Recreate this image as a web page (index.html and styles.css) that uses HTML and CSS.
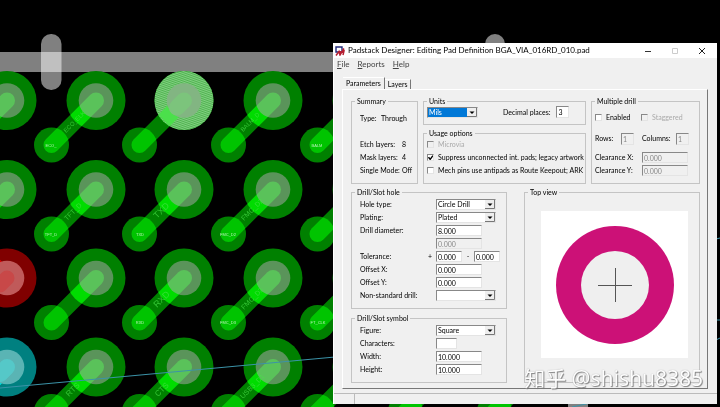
FILE: index.html
```
<!DOCTYPE html>
<html lang="en">
<head>
<meta charset="utf-8">
<title>Padstack Designer</title>
<link rel="stylesheet" href="styles.css">
</head>
<body>
<svg class="board" viewBox="0 0 720 407" preserveAspectRatio="xMinYMin slice" aria-hidden="true">
  <defs>
    <pattern id="hatch" width="2" height="2" patternUnits="userSpaceOnUse" patternTransform="rotate(20)">
      <rect width="2" height="2" fill="#50b450"/><rect width="2" height="1" fill="#82cf82"/>
    </pattern>
    <clipPath id="ring"><circle r="29.5"/></clipPath>
    <clipPath id="via"><circle cx="-44.5" cy="44.5" r="17.5"/></clipPath>
    <g id="net">
      <circle r="29.5" fill="#008000"/>
      <circle cx="-44.5" cy="44.5" r="17.5" fill="#008000"/>
      <path d="M0 0L-44.5 44.5" class="trace"/>
      <path d="M0 0L-44.5 44.5" class="trace on-pad" clip-path="url(#ring)"/>
      <path d="M0 0L-44.5 44.5" class="trace on-via" clip-path="url(#via)"/>
      <circle r="17.3" class="drill"/>
    </g>
  </defs>
  <rect width="720" height="407" fill="#000"/>
  <rect y="52" width="720" height="20" fill="#808080"/>
  <rect x="41" y="34" width="20.500" height="56" rx="10" fill="#808080"/>
  <rect x="41" y="52" width="20.500" height="20" fill="#c0c0c0"/>
  <rect x="485" y="34" width="20" height="56" rx="10" fill="#808080"/>
  <rect x="717" y="50" width="3" height="24" fill="#000"/>
  <rect x="568" y="380" width="20" height="27" fill="#808080"/>
  <use href="#net" x="7" y="100.500"/><use href="#net" x="96" y="100.500"/><use href="#net" x="184" y="100.500"/><use href="#net" x="273" y="100.500"/><use href="#net" x="362" y="100.500"/>
  <use href="#net" x="7" y="189.500"/><use href="#net" x="96" y="189.500"/><use href="#net" x="184" y="189.500"/><use href="#net" x="273" y="189.500"/><use href="#net" x="362" y="189.500"/>
  <use href="#net" x="96" y="278"/><use href="#net" x="184" y="278"/><use href="#net" x="273" y="278"/><use href="#net" x="362" y="278"/>
  <use href="#net" x="96" y="367"/><use href="#net" x="184" y="367"/><use href="#net" x="273" y="367"/><use href="#net" x="362" y="367"/>
  <use href="#net" x="450" y="367"/><use href="#net" x="539" y="367"/>
  <circle cx="184" cy="100.500" r="29.500" fill="url(#hatch)"/>
  <path d="M184 100.500L164 120.500" stroke="#4be04b" stroke-width="16"/>
  <circle cx="184" cy="100.500" r="17.300" fill="#82b582"/>
  <path d="M184 100.500L177 107.500" stroke="#7cc47c" stroke-width="16" stroke-linecap="round"/>
  <g transform="translate(7 278)">
    <circle r="29.500" fill="#800000"/>
    <path d="M0 0L-45 -45" stroke="#d80000" stroke-width="16" stroke-linecap="round" clip-path="url(#ring)"/>
    <circle r="17.300" fill="#c05a5a"/><path d="M0 0L-7 7" stroke="#c84848" stroke-width="15" stroke-linecap="round"/>
  </g>
  <g transform="translate(7 367)">
    <circle r="29.500" fill="#008080"/>
    <path d="M0 0L-45 45" stroke="#00dcdc" stroke-width="16" stroke-linecap="round" clip-path="url(#ring)"/>
    <circle r="17.300" fill="#5ab4b4"/><path d="M0 0L-7 7" stroke="#55c8c8" stroke-width="16" stroke-linecap="round"/>
  </g>
  <g class="netname">
    <text transform="translate(66 133) rotate(-45)" font-size="6">ECO_ELK</text>
    <text transform="translate(243 132) rotate(-45)" font-size="6">BALM_D</text>
    <text transform="translate(67 221) rotate(-45)" font-size="7">TFT_D</text>
    <text transform="translate(157 219) rotate(-45)" font-size="9">TXD</text>
    <text transform="translate(244 221) rotate(-45)" font-size="7">FMC_D2</text>
    <text transform="translate(157 308) rotate(-45)" font-size="9">RXD</text>
    <text transform="translate(244 310) rotate(-45)" font-size="7">FMC_D3</text>
    <text transform="translate(69 397) rotate(-45)" font-size="8">RTS</text>
    <text transform="translate(158 397) rotate(-45)" font-size="8">CTS</text>
    <text transform="translate(243 399) rotate(-45)" font-size="7">USB3_D1</text>
  </g>
  <g class="vianame">
    <text x="51" y="147">ECO_</text><text x="317" y="147">BALM</text>
    <text x="51" y="236">TFT_D</text><text x="140" y="236">TXD</text><text x="228" y="236">FMC_D2</text>
    <text x="140" y="324">RXD</text><text x="228" y="324">FMC_D3</text><text x="318" y="324">FT_CLK</text>
  </g>
  <path d="M0 388L335 357M572 407L600 401M716 239L720 238M716 320H720M716 340L720 338" fill="none" stroke="#3b93a8"/>
</svg>

<main class="window">
  <header class="titlebar">
    <svg class="appicon" viewBox="0 0 10 10" aria-hidden="true"><path d="M1 1H7V6H1Z" fill="#fff" stroke="#202878" stroke-width="1.400"/><path d="M1 9.500L4 5.500L5 9L9 2.500M3 6.500L9 5L8 9" fill="none" stroke="#b51f32" stroke-width="1.500"/></svg>
    <h1>Padstack Designer: Editing Pad Definition BGA_VIA_016RD_010.pad</h1>
    <button class="winbtn" aria-label="Minimize"><svg viewBox="0 0 8 8"><path d="M1 4.500H7" stroke="#333"/></svg></button>
    <button class="winbtn" aria-label="Maximize" disabled><svg viewBox="0 0 8 8"><path d="M1.500 1.500H6.500V6.500H1.500Z" fill="none" stroke="#ccc"/></svg></button>
    <button class="winbtn" aria-label="Close"><svg viewBox="0 0 8 8"><path d="M1 1L7 7M7 1L1 7" stroke="#222"/></svg></button>
  </header>
  <nav class="menu"><button><u>F</u>ile</button><button><u>R</u>eports</button><button><u>H</u>elp</button></nav>
  <div class="tabs" role="tablist"><button class="tab active" role="tab" aria-selected="true">Parameters</button><button class="tab" role="tab" aria-selected="false">Layers</button></div>
  <div class="panel">
    <div class="top">
      <fieldset class="summary"><legend>Summary</legend>
        <dl>
          <div class="type"><dt>Type:</dt><dd>Through</dd></div>
          <div><dt>Etch layers:</dt><dd>8</dd></div>
          <div><dt>Mask layers:</dt><dd>4</dd></div>
          <div><dt>Single Mode:</dt><dd>Off</dd></div>
        </dl>
      </fieldset>
      <div class="middle">
        <fieldset class="units"><legend>Units</legend>
          <select class="selected" aria-label="Units"><option>Mils</option></select>
          <label for="places">Decimal places:</label><input id="places" class="tiny" value="3">
        </fieldset>
        <fieldset class="usage"><legend>Usage options</legend>
          <label class="check off"><input type="checkbox" disabled>Microvia</label>
          <label class="check"><input type="checkbox" checked>Suppress unconnected int. pads; legacy artwork</label>
          <label class="check"><input type="checkbox">Mech pins use antipads as Route Keepout; ARK</label>
        </fieldset>
      </div>
      <fieldset class="multi"><legend>Multiple drill</legend>
        <div class="pair"><label class="check"><input type="checkbox">Enabled</label><label class="check off"><input type="checkbox" disabled>Staggered</label></div>
        <div class="counts"><label for="rows">Rows:</label><input id="rows" class="tiny" value="1" disabled><label for="cols">Columns:</label><input id="cols" class="tiny" value="1" disabled></div>
        <div class="clear"><label for="cx">Clearance X:</label><input id="cx" value="0.000" disabled></div>
        <div class="clear"><label for="cy">Clearance Y:</label><input id="cy" value="0.000" disabled></div>
      </fieldset>
    </div>
    <div class="bottom">
      <div class="left">
        <fieldset class="form hole"><legend>Drill/Slot hole</legend>
          <div class="row"><label for="type">Hole type:</label><select id="type"><option>Circle Drill</option></select></div>
          <div class="row"><label for="plating">Plating:</label><select id="plating"><option>Plated</option></select></div>
          <div class="row"><label for="dia">Drill diameter:</label><input id="dia" value="8.000"></div>
          <div class="row"><span></span><input aria-label="Second diameter" value="0.000" disabled></div>
          <div class="row"><label for="tol">Tolerance: <span class="plus">+</span></label><div class="tolerance"><input id="tol" value="0.000"><span>-</span><input aria-label="Negative tolerance" value="0.000"></div></div>
          <div class="row"><label for="ox">Offset X:</label><input id="ox" value="0.000"></div>
          <div class="row"><label for="oy">Offset Y:</label><input id="oy" value="0.000"></div>
          <div class="row"><label for="nsd">Non-standard drill:</label><select id="nsd"><option></option></select></div>
        </fieldset>
        <fieldset class="form symbol"><legend>Drill/Slot symbol</legend>
          <div class="row"><label for="figure">Figure:</label><select id="figure"><option>Square</option></select></div>
          <div class="row"><label for="chars">Characters:</label><input id="chars" class="short" value=""></div>
          <div class="row"><label for="w">Width:</label><input id="w" value="10.000"></div>
          <div class="row"><label for="h">Height:</label><input id="h" value="10.000"></div>
        </fieldset>
      </div>
      <fieldset class="view"><legend>Top view</legend>
        <svg viewBox="0 0 147 147" role="img" aria-label="Pad top view"><rect width="147" height="147" fill="#fff"/><circle cx="74" cy="74" r="59" fill="#cc1177"/><circle cx="74" cy="74" r="34" fill="#efefef"/><path d="M57 74.500H91M74.500 57V91" stroke="#555"/></svg>
      </fieldset>
    </div>
  </div>
  <footer class="status"><span></span><span></span></footer>
  <div class="watermark">知乎 @shishu8385</div>
</main>
</body>
</html>
```
FILE: styles.css
```
* { box-sizing: border-box; }
body { margin: 0; min-height: 100vh; background: #000; overflow: hidden; }
.board { display: block; width: 100vw; height: 100vh; }
.trace { stroke: #008000; stroke-width: 16px; stroke-linecap: round; }
.on-pad { stroke: #00dc00; }
.on-via { stroke: #00c400; }
.drill { fill: #b4a8b4; fill-opacity: .5; }
.netname { fill: #4be04b; font-family: "Liberation Sans", sans-serif; opacity: .7; }
.vianame { fill: #b4f0b4; font-family: "Liberation Sans", sans-serif; font-size: 4px; text-anchor: middle; }

.window {
  position: absolute; left: 333px; right: 3px; top: 43px;
  background: #f0f0f0; color: #000; border-left: 1px solid #fff;
  font: 7px/9px Lato, "Liberation Sans", sans-serif;
}
button, input, select { font: inherit; color: inherit; margin: 0; padding: 0; border: 0; background: none; border-radius: 0; }

.titlebar { display: flex; align-items: center; height: 15px; padding: 0 2px 0 1px; background: #fff; }
.appicon { width: 10px; height: 10px; margin-right: 3px; }
.titlebar h1 { flex: 1; margin: 0; font-size: 8px; font-weight: 400; line-height: 15px; white-space: nowrap; }
.winbtn { width: 27px; height: 15px; display: flex; align-items: center; justify-content: center; }
.winbtn svg { width: 8px; height: 8px; }
.menu { display: flex; gap: 8px; height: 13px; padding-left: 3px; color: #444; font-size: 8px; line-height: 13px; }

.tabs { display: flex; align-items: flex-end; height: 18px; padding-left: 9px; }
.tab { height: 10px; padding: 0 3px; border-top: 1px solid #fff; border-right: 1px solid #777; }
.tab.active { height: 12px; }

.panel { margin: 0 9px 4px 8px; padding: 7px 7px 5px 8px; border: 1px solid #fff; border-right-color: #777; border-bottom-color: #777; }
fieldset { min-width: 0; margin: 0; padding: 0 3px; border: 1px solid #c4c4c4; }
legend { padding: 0 2px; line-height: 9px; }
.top { display: flex; gap: 5px; height: 87px; margin-bottom: 4px; }
.summary { width: 67px; }
.summary dl { margin: 0; padding: 6px 0 0 5px; }
.summary dl div { display: flex; height: 13px; line-height: 13px; }
.summary dt { width: 42px; white-space: nowrap; }
.summary dd { margin: 0; }
.summary .type { margin-bottom: 13px; }
.summary .type dt { width: 21px; }
.middle { flex: 1; display: flex; flex-direction: column; gap: 4px; min-width: 0; }
.units { display: flex; align-items: center; height: 28px; padding-bottom: 2px; }
.units select { width: 51px; }
.units label { margin: 0 6px 0 25px; }
.usage { flex: 1; }
.multi { width: 109px; }

input, select { height: 11px; background: #fff; border: 1px solid #888; border-right-color: #e4e4e4; border-bottom-color: #e4e4e4; }
input { width: 46px; padding-left: 1px; }
input:disabled { background: #f0f0f0; color: #888; }
input.tiny { width: 13px; height: 12px; }
input.short { width: 21px; }
select {
  appearance: none; width: 60px; padding-left: 1px; line-height: 9px;
  background: #fff url("data:image/svg+xml,%3Csvg xmlns='http://www.w3.org/2000/svg' width='10' height='9'%3E%3Cpath d='M0 0H10V9H0Z' fill='%23eee'/%3E%3Cpath d='M0 8.500H9.500V0' fill='none' stroke='%23777'/%3E%3Cpath d='M2.500 3.500H7.500L5 6Z' fill='%23000'/%3E%3C/svg%3E") no-repeat right center;
}
select.selected { color: #fff; background-color: #0078d7; }
.check { display: flex; align-items: center; height: 13px; white-space: nowrap; }
.check.off { color: #aaa; }
.check input { appearance: none; width: 7px; height: 7px; margin-right: 4px; padding: 0; flex: none; }
.check input:checked { background: #fff url("data:image/svg+xml,%3Csvg xmlns='http://www.w3.org/2000/svg' viewBox='0 0 6 6'%3E%3Cpath d='M1 2.500L2.500 4.500L5 1' fill='none' stroke='%23000' stroke-width='1.300'/%3E%3C/svg%3E") center / 6px 6px no-repeat; }
.pair { display: grid; grid-template-columns: 46px 1fr; padding-top: 5px; }
.counts { display: grid; grid-template-columns: 26px 21px 34px 13px; align-items: center; height: 13px; margin: 8px 0 6px; }
.clear { display: grid; grid-template-columns: 47px 47px; align-items: center; height: 13px; }

.bottom { display: flex; gap: 17px; }
.left { display: flex; flex-direction: column; gap: 5px; width: 156px; }
.form { padding: 1px 3px 6px 8px; }
.form legend { margin-left: -5px; }
.row { display: grid; grid-template-columns: 76px 1fr; align-items: center; height: 13px; white-space: nowrap; }
.row label { display: flex; justify-content: space-between; }
.plus { margin-right: 4px; }
.tolerance { display: flex; align-items: center; }
.tolerance input { width: 26px; }
.tolerance span { width: 12px; text-align: center; }
.view { flex: 1; }
.view svg { display: block; width: 147px; max-width: 100%; margin: 14px 0 0 13px; }
.status { display: flex; height: 11px; border-top: 1px solid #bbb; }
.status span:first-child { width: 21px; border-right: 1px solid #bbb; }
.watermark {
  position: absolute; right: 14px; bottom: 13px; color: #fff; opacity: .9;
  font: 21px/26px "Noto Sans", "Noto Sans CJK SC", sans-serif; white-space: nowrap;
  text-shadow: 1px 1px 1px #777, 0 0 1px #999;
}
```
